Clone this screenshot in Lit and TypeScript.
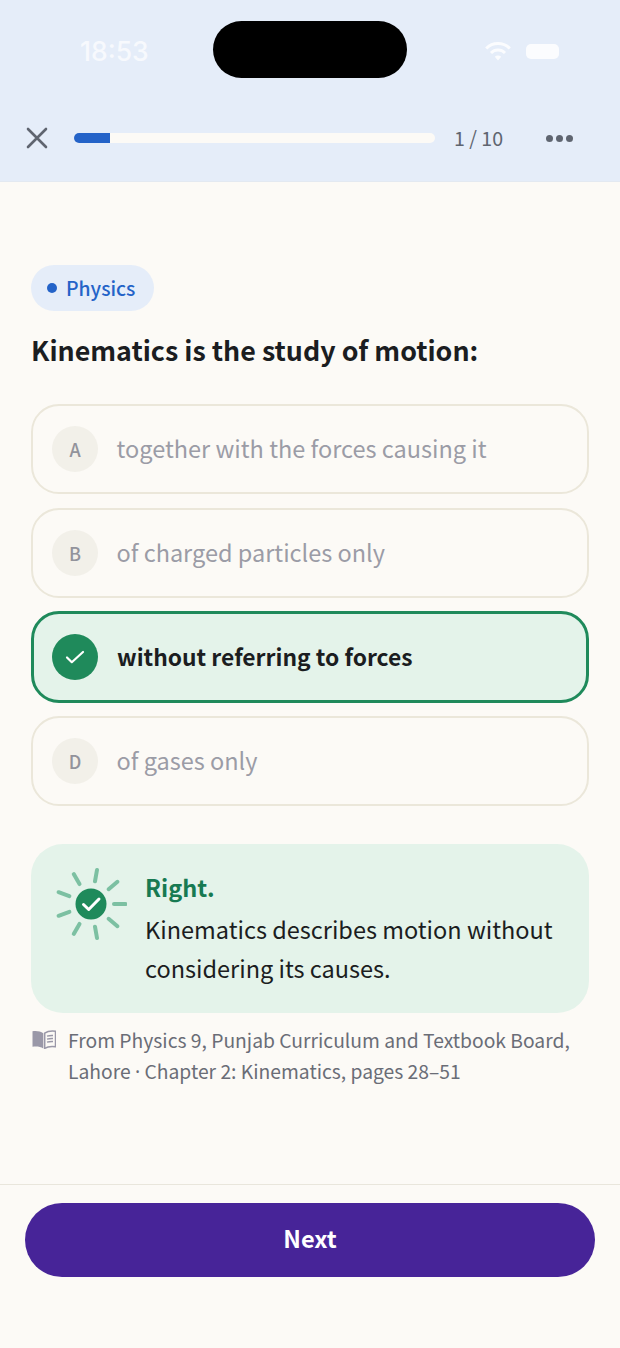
import { LitElement, css, html, svg } from "lit";
import { customElement } from "lit/decorators.js";

const options = [
  { key: "A", text: "together with the forces causing it" },
  { key: "B", text: "of charged particles only" },
  { key: "C", text: "without referring to forces", correct: true },
  { key: "D", text: "of gases only" },
];

// burst of 9 rays round the feedback check, one every 40deg
const rays = Array.from({ length: 9 }, (_, i) => {
  const a = (i * 40 * Math.PI) / 180;
  return svg`<line
    x1=${(36 + 23 * Math.cos(a)).toFixed(2)}
    y1=${(36 + 23 * Math.sin(a)).toFixed(2)}
    x2=${(36 + 34.5 * Math.cos(a)).toFixed(2)}
    y2=${(36 + 34.5 * Math.sin(a)).toFixed(2)}
  />`;
});

@customElement("app-root")
export class AppRoot extends LitElement {
  static styles = css`
    :host {
      display: block;
      width: 620px;
      height: 1348px;
      background: #fcfaf6;
      font-family: "Noto Sans CJK SC", "Noto Sans", sans-serif;
      color: #1b1d21;
      overflow: hidden;
    }

    .page {
      display: flex;
      flex-direction: column;
      height: 100%;
    }

    .top {
      position: relative;
      height: 182px;
      box-sizing: border-box;
      background: #e5edf9;
      border-bottom: 1px solid #e3e9f1;
      flex: none;
    }

    .status {
      display: flex;
      align-items: center;
      justify-content: space-between;
      height: 102px;
      padding: 0 61px 0 80px;
      box-sizing: border-box;
      color: #f6f8fc;
    }

    .time {
      font-family: Inter, sans-serif;
      font-size: 26.5px;
      font-weight: 500;
      color: #f7f9fd;
    }

    .island {
      position: absolute;
      left: 213px;
      top: 21px;
      width: 194px;
      height: 57px;
      border-radius: 28.5px;
      background: #000;
    }

    .status-icons {
      display: flex;
      align-items: center;
      gap: 15px;
    }

    .battery {
      width: 33px;
      height: 15px;
      border-radius: 5px;
      background: #fbfcfe;
    }

    .nav {
      display: flex;
      align-items: center;
      height: 34px;
      margin-top: 19px;
      padding-left: 26px;
    }

    .close {
      display: block;
      flex: none;
      margin-right: 26px;
    }

    .track {
      width: 361px;
      height: 10px;
      border-radius: 5px;
      background: #fcfaf6;
      overflow: hidden;
      flex: none;
    }

    .fill {
      height: 100%;
      background: #2463c8;
    }

    .count {
      width: 49px;
      margin-left: 19px;
      font-size: 19.6px;
      line-height: 34px;
      color: #5f6570;
      white-space: nowrap;
      flex: none;
    }

    .more {
      display: flex;
      gap: 3px;
      margin-left: 43px;
    }

    .more i {
      width: 7px;
      height: 7px;
      border-radius: 50%;
      background: #5f6570;
    }

    .content {
      flex: 1;
      padding: 83px 31px 0;
    }

    .pill {
      display: inline-flex;
      align-items: center;
      gap: 10px;
      height: 46px;
      width: 123px;
      box-sizing: border-box;
      padding: 0 0 0 16px;
      border-radius: 23px;
      background: #e5edf9;
      color: #2463c8;
      font-size: 19.4px;
      line-height: 44px;
      font-weight: 500;
    }

    .pill span {
      margin-left: -1px;
    }

    .pill i {
      width: 10px;
      height: 10px;
      border-radius: 50%;
      background: #2463c8;
    }

    h1 {
      margin: 17px 0 32px;
      font-size: 26.8px;
      line-height: 44px;
      font-weight: 600;
    }

    .options {
      display: flex;
      flex-direction: column;
      gap: 14px;
    }

    .option {
      display: flex;
      align-items: center;
      gap: 18.5px;
      height: 90px;
      box-sizing: border-box;
      padding: 0 19px;
      border: 2px solid #ebe7da;
      border-radius: 28px;
      font-size: 23.5px;
      line-height: 37px;
      color: #9b9ca6;
    }

    .option span {
      padding-bottom: 2px;
    }

    .option.correct {
      height: 92px;
      margin: -1px 0;
      gap: 19px;
      border: 3px solid #1f8a5b;
      background: #e4f3ea;
      color: #1b1d21;
      font-weight: 600;
      font-size: 22.8px;
      padding: 0 18px;
    }

    .badge {
      display: flex;
      align-items: center;
      justify-content: center;
      width: 46px;
      height: 46px;
      border-radius: 50%;
      background: #f2f0e9;
      color: #92939b;
      font-size: 18px;
      font-weight: 500;
      flex: none;
    }

    .correct .badge {
      background: #1f8a5b;
    }

    .feedback {
      display: flex;
      height: 169px;
      box-sizing: border-box;
      margin-top: 38px;
      padding: 21px 20px 0 24px;
      border-radius: 32px;
      background: #e4f3ea;
    }

    .burst {
      display: block;
      flex: none;
      width: 72px;
      height: 72px;
      margin: 3px 18px 0 0;
    }

    .burst line {
      stroke: #7cc0a2;
      stroke-width: 4;
      stroke-linecap: round;
    }

    .feedback-title {
      font-size: 23.5px;
      line-height: 44px;
      font-weight: 600;
      color: #177a52;
    }

    .feedback-text {
      margin-top: 1px;
      font-size: 23.5px;
      line-height: 39px;
    }

    .source {
      display: flex;
      gap: 12px;
      margin-top: 12px;
      font-size: 19.3px;
      line-height: 31px;
      color: #6a6d76;
    }

    .source svg {
      display: block;
      flex: none;
      margin: 5px 0 0 1px;
    }

    /* the CJK font's middle dot is full width */
    .dot {
      font-family: "Noto Sans", sans-serif;
    }

    .footer {
      height: 164px;
      box-sizing: border-box;
      padding: 18px 25px 0;
      border-top: 1px solid #e9e6dc;
      flex: none;
    }

    .next {
      display: block;
      width: 100%;
      height: 74px;
      padding: 0 0 4px;
      border: 0;
      border-radius: 37px;
      background: #472498;
      color: #fff;
      font: 700 23.6px "Noto Sans CJK SC", "Noto Sans", sans-serif;
    }
  `;

  protected render() {
    return html`
      <div class="page">
        <header class="top">
          <div class="status">
            <span class="time">18:53</span>
            <div class="status-icons">
              <svg width="26" height="20" viewBox="0 0 26 20" fill="none" stroke="#fbfcfe" stroke-width="3">
                <path d="M1.200 7.500a16.600 16.600 0 0 1 23.600 0" />
                <path d="M6 12a9.900 9.900 0 0 1 14 0" />
                <path d="M9.800 15.800l3.200 3.800 3.200-3.800a4.400 4.400 0 0 0-6.400 0z" fill="#fbfcfe" stroke="none" />
              </svg>
              <div class="battery"></div>
            </div>
          </div>
          <div class="island"></div>
          <div class="nav">
            <svg class="close" width="22" height="22" viewBox="0 0 22 22" stroke="#5f6570" stroke-width="2.6" stroke-linecap="round">
              <path d="M2 2l18 18M20 2L2 20" />
            </svg>
            <div class="track"><div class="fill" style="width: ${(1 / 10) * 100}%"></div></div>
            <span class="count">1 / 10</span>
            <div class="more"><i></i><i></i><i></i></div>
          </div>
        </header>

        <main class="content">
          <div class="pill"><i></i><span>Physics</span></div>
          <h1>Kinematics is the study of motion:</h1>

          <div class="options">
            ${options.map(
              (o) => html`
                <div class="option ${o.correct ? "correct" : ""}">
                  <div class="badge">
                    ${o.correct
                      ? html`<svg width="20" height="16" viewBox="0 0 20 16" fill="none" stroke="#fff" stroke-width="2.200" stroke-linecap="round" stroke-linejoin="round">
                          <path d="M2 8.500l4.800 4.700L18 3" />
                        </svg>`
                      : o.key}
                  </div>
                  <span>${o.text}</span>
                </div>
              `
            )}
          </div>

          <section class="feedback">
            <svg class="burst" viewBox="0 0 72 72" fill="none">
              ${rays}
              <circle cx="36" cy="36" r="15.5" fill="#1f8a5b" />
              <path d="M28.5 36.5l5.2 5L44 31" stroke="#fff" stroke-width="3" stroke-linecap="round" stroke-linejoin="round" />
            </svg>
            <div>
              <div class="feedback-title">Right.</div>
              <div class="feedback-text">Kinematics describes motion without considering its causes.</div>
            </div>
          </section>

          <div class="source">
            <svg width="24" height="19" viewBox="0 0 24 19">
              <path d="M11.3 3.2C8.6 1.2 4.6.7.5 1.2v15.600c4-.5 8-.2 10.800 1.600z" fill="#9a98a8" />
              <path d="M12.700 3.200c2.700-2 6.700-2.500 10.800-2v15.600c-4-.5-8-.2-10.800 1.600z" fill="none" stroke="#9a98a8" stroke-width="1.500" />
              <path d="M15 6.200c1.800-.6 3.600-.8 6-.7M15 9.200c1.800-.6 3.600-.8 6-.7M15 12.200c1.800-.6 3.600-.8 6-.7" fill="none" stroke="#9a98a8" stroke-width="1.300" />
            </svg>
            <div>
              <div>From Physics 9, Punjab Curriculum and Textbook Board,</div>
              <div>Lahore <span class="dot">·</span> Chapter 2: Kinematics, pages 28–51</div>
            </div>
          </div>
        </main>

        <footer class="footer">
          <button class="next">Next</button>
        </footer>
      </div>
    `;
  }
}
